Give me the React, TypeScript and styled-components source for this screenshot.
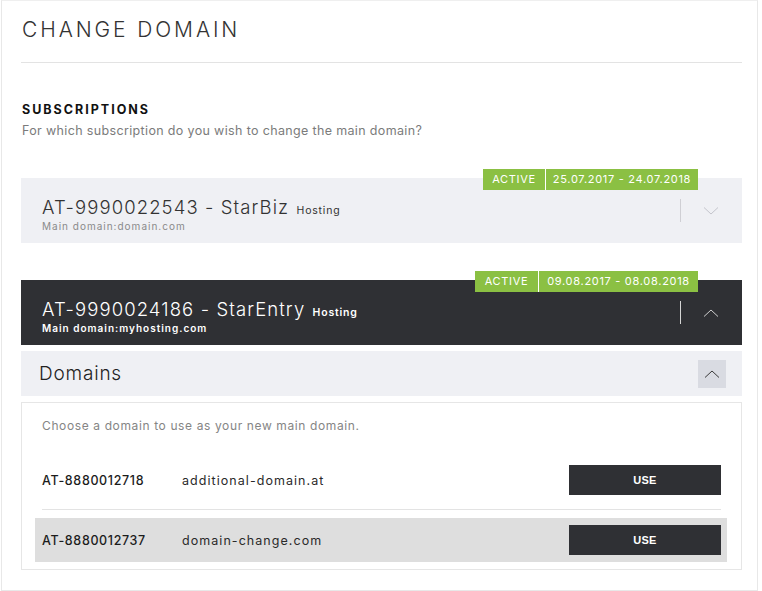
import React from 'react';
import styled, { createGlobalStyle } from 'styled-components';

const GlobalStyle = createGlobalStyle`
  html, body {
    margin: 0;
    padding: 0;
    background: #fff;
  }
  body {
    font-family: Inter, "Liberation Sans", sans-serif;
    color: #2b2b2b;
  }
`;

const Frame = styled.div`
  box-sizing: border-box;
  width: 757px;
  height: 591px;
  margin-left: 1px;
  border: 1px solid #e8e8e8;
  border-top-color: #efefef;
  padding: 0 15px 0 19px;
`;

const PageTitle = styled.h1`
  margin: 0;
  padding: 16px 0 0 1px;
  height: 62px;
  box-sizing: border-box;
  font-size: 21px;
  font-weight: 300;
  letter-spacing: 2.9px;
  color: #333;
  line-height: 26px;
  border-bottom: 1px solid #e3e3e3;
`;

const SectionTitle = styled.h2`
  margin: 39px 0 0 1px;
  font-size: 12.5px;
  font-weight: 700;
  letter-spacing: 2px;
  line-height: 16px;
  color: #111;
`;

const SectionText = styled.p`
  margin: 5px 0 0 1px;
  font-size: 12.5px;
  line-height: 16px;
  letter-spacing: 0.35px;
  color: #7b7b7b;
  font-weight: 400;
`;

const SubscriptionCard = styled.div<{ $dark?: boolean }>`
  position: relative;
  height: 65px;
  display: flex;
  align-items: center;
  padding: 0 23px 0 21px;
  background: ${p => (p.$dark ? '#2f3034' : '#eff0f4')};
  color: ${p => (p.$dark ? '#fff' : '#333')};
  margin-top: ${p => (p.$dark ? '37px' : '39px')};
`;

const Badge = styled.div`
  position: absolute;
  top: -9px;
  right: 44px;
  display: flex;
  gap: 1px;
  background: #fff;
  height: 21px;
`;

const BadgeCell = styled.span<{ $w: number }>`
  width: ${p => p.$w}px;
  background: #8bc043;
  color: #fff;
  font-size: 11px;
  letter-spacing: 0.7px;
  line-height: 21px;
  text-align: center;
`;

const CardInfo = styled.div`
  flex: 1;
  padding-top: 8px;
`;

const CardTitle = styled.div`
  font-size: 18.5px;
  font-weight: 300;
  line-height: 18px;
  letter-spacing: 1.1px;
`;

const Product = styled.span<{ $dark?: boolean }>`
  font-size: 10.5px;
  font-weight: ${p => (p.$dark ? 600 : 400)};
  letter-spacing: 0.8px;
  margin-left: 1px;
`;

const MainDomain = styled.div<{ $dark?: boolean }>`
  font-size: 10px;
  line-height: 12px;
  letter-spacing: 1px;
  color: ${p => (p.$dark ? '#fff' : '#8a8a8a')};
  font-weight: ${p => (p.$dark ? 600 : 400)};
`;

const ToggleDivider = styled.div<{ $dark?: boolean }>`
  width: 1px;
  height: 23px;
  background: ${p => (p.$dark ? '#d5d5d5' : '#cfcfd4')};
  margin-right: 22px;
`;

const Chevron = styled.svg`
  display: block;
  width: 16px;
  height: 10px;
`;

const DomainsHeader = styled.div`
  margin-top: 6px;
  height: 45px;
  background: #eff0f4;
  display: flex;
  align-items: center;
  justify-content: space-between;
  padding: 0 16px 0 18px;
`;

const DomainsTitle = styled.div`
  font-size: 19px;
  font-weight: 300;
  letter-spacing: 0.8px;
  color: #222;
`;

const ToggleButton = styled.button`
  width: 28px;
  height: 28px;
  border: 0;
  padding: 0;
  background: #d9dbe2;
  display: flex;
  align-items: center;
  justify-content: center;
  cursor: pointer;
`;

const DomainBox = styled.div`
  margin-top: 6px;
  border: 1px solid #e6e6e6;
  padding: 0 14px 7px 13px;
`;

const Intro = styled.p`
  margin: 0;
  padding: 16px 0 0 7px;
  height: 55px;
  box-sizing: border-box;
  font-size: 12px;
  line-height: 14px;
  letter-spacing: 0.62px;
  color: #858585;
`;

const DomainRow = styled.div<{ $highlight?: boolean }>`
  height: 44px;
  display: flex;
  align-items: center;
  padding: 0 6px 0 7px;
  background: ${p => (p.$highlight ? '#dedede' : 'transparent')};
`;

const RowSeparator = styled.div`
  height: 1px;
  background: #e3e3e3;
  margin: 7px 6px 8px 7px;
`;

const Contract = styled.span`
  width: 140px;
  font-size: 12.5px;
  font-weight: 500;
  letter-spacing: 0.65px;
  color: #1c1c1c;
`;

const DomainName = styled.span`
  flex: 1;
  font-size: 12.5px;
  letter-spacing: 1.05px;
  color: #2a2a2a;
`;

const UseButton = styled.button`
  width: 152px;
  height: 30px;
  border: 0;
  background: #2f3034;
  color: #fff;
  font-family: "Liberation Sans", Arial, sans-serif;
  font-size: 11px;
  font-weight: 700;
  letter-spacing: 0.3px;
  cursor: pointer;
`;

const ChevronIcon: React.FC<{ up?: boolean; color: string }> = ({ up, color }) => (
  <Chevron viewBox="0 0 16 10">
    <polyline
      points={up ? '1,8.5 8,2 15,8.5' : '1,1.5 8,8 15,1.5'}
      fill="none"
      stroke={color}
      strokeWidth="1"
    />
  </Chevron>
);

const subscriptions = [
  {
    id: 'AT-9990022543',
    name: 'StarBiz',
    domain: 'domain.com',
    period: '25.07.2017 - 24.07.2018',
    widths: [62, 152],
    open: false,
  },
  {
    id: 'AT-9990024186',
    name: 'StarEntry',
    domain: 'myhosting.com',
    period: '09.08.2017 - 08.08.2018',
    widths: [63, 159],
    open: true,
  },
];

const domains = [
  { id: 'AT-8880012718', name: 'additional-domain.at' },
  { id: 'AT-8880012737', name: 'domain-change.com' },
];

export default function App() {
  return (
    <>
      <GlobalStyle />
      <Frame>
        <PageTitle>CHANGE DOMAIN</PageTitle>
        <SectionTitle>SUBSCRIPTIONS</SectionTitle>
        <SectionText>For which subscription do you wish to change the main domain?</SectionText>

        {subscriptions.map(sub => (
          <React.Fragment key={sub.id}>
            <SubscriptionCard $dark={sub.open}>
              <Badge>
                <BadgeCell $w={sub.widths[0]}>ACTIVE</BadgeCell>
                <BadgeCell $w={sub.widths[1]}>{sub.period}</BadgeCell>
              </Badge>
              <CardInfo>
                <CardTitle>
                  {sub.id} - {sub.name} <Product $dark={sub.open}>Hosting</Product>
                </CardTitle>
                <MainDomain $dark={sub.open}>Main domain:{sub.domain}</MainDomain>
              </CardInfo>
              <ToggleDivider $dark={sub.open} />
              <ChevronIcon up={sub.open} color={sub.open ? '#cfcfcf' : '#c4c5cc'} />
            </SubscriptionCard>

            {sub.open && (
              <>
                <DomainsHeader>
                  <DomainsTitle>Domains</DomainsTitle>
                  <ToggleButton title="Collapse">
                    <ChevronIcon up color="#3a3a3a" />
                  </ToggleButton>
                </DomainsHeader>
                <DomainBox>
                  <Intro>Choose a domain to use as your new main domain.</Intro>
                  {domains.map((d, i) => (
                    <React.Fragment key={d.id}>
                      {i > 0 && <RowSeparator />}
                      <DomainRow $highlight={i === 1}>
                        <Contract>{d.id}</Contract>
                        <DomainName>{d.name}</DomainName>
                        <UseButton>USE</UseButton>
                      </DomainRow>
                    </React.Fragment>
                  ))}
                </DomainBox>
              </>
            )}
          </React.Fragment>
        ))}
      </Frame>
    </>
  );
}
